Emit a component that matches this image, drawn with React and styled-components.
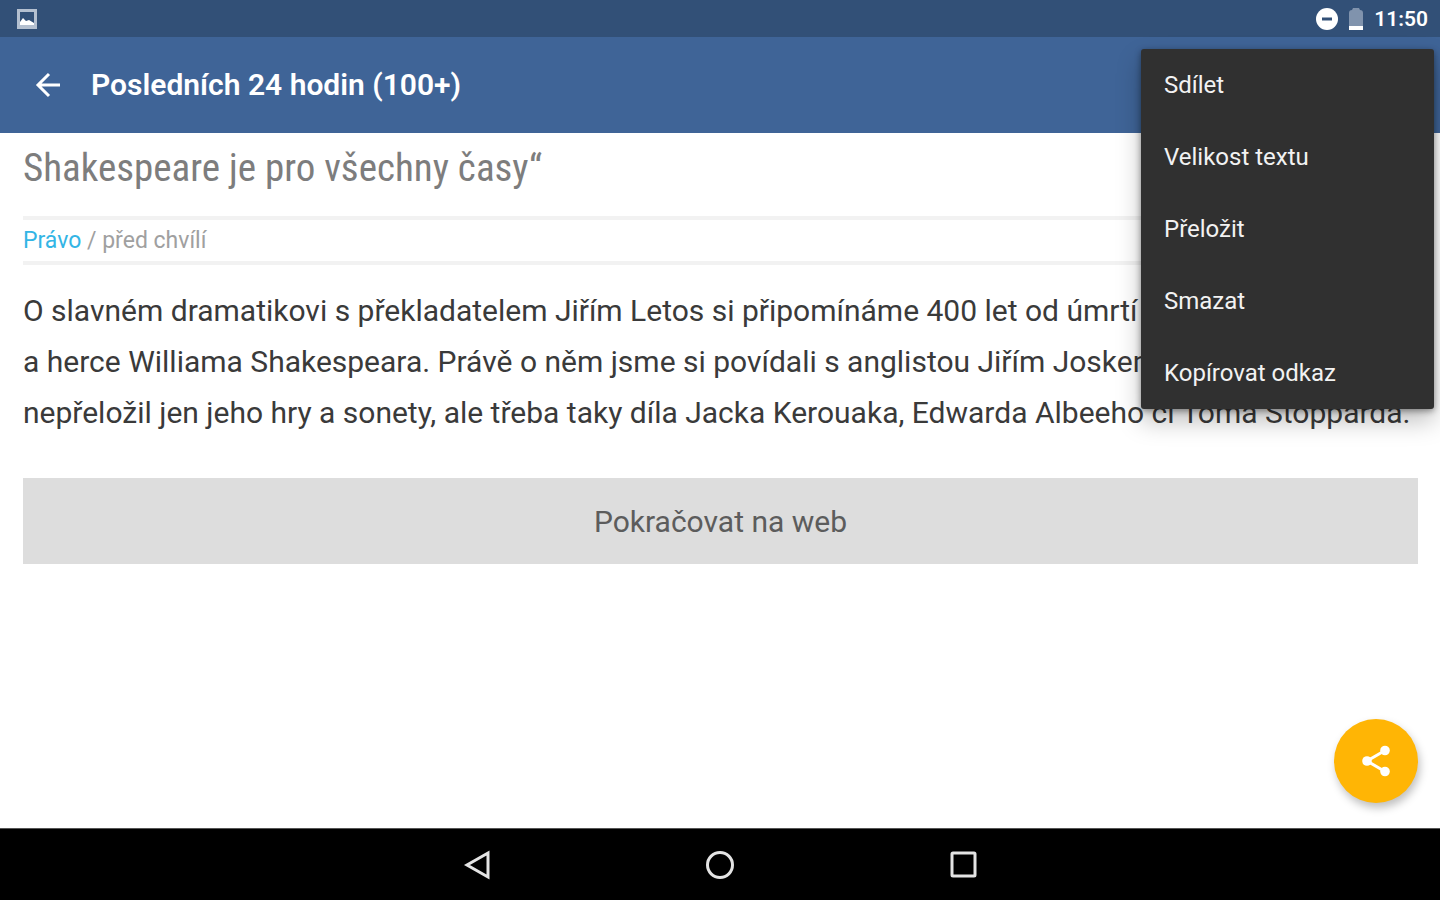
import { styled, createGlobalStyle } from 'styled-components';


const GlobalStyle = createGlobalStyle`
    *, *::before, *::after {
        box-sizing: border-box;
    }

    body {
        margin: 0;
        background-color: #fff;
        font-family: Roboto, "Noto Sans", sans-serif;
    }

    button {
        border: 0;
        padding: 0;
        background: none;
        color: inherit;
        font: inherit;
        cursor: pointer;
    }

    svg {
        display: block;
    }
`;

const Screen = styled.div`
    position: relative;
    display: flex;
    flex-direction: column;
    min-height: 100vh;
`;

const StatusBar = styled.div`
    display: flex;
    align-items: center;
    justify-content: space-between;
    height: 37px;
    padding: 0 12px 0 16px;
    background-color: #325077;
    color: #fff;
`;

const StatusGroup = styled.div`
    display: flex;
    align-items: center;
    gap: 11px;
`;

const Clock = styled.time`
    font-size: 21px;
    font-weight: 600;
    line-height: 24px;
`;

const AppBar = styled.header`
    display: flex;
    align-items: center;
    gap: 23px;
    height: 96px;
    padding: 0 28px;
    background-color: #3f6497;
    color: #fff;
`;

const BackButton = styled.button`
    display: flex;
    align-items: center;
    justify-content: center;
    width: 40px;
    height: 48px;
`;

const AppTitle = styled.h1`
    margin: 0;
    font-size: 30px;
    font-weight: 600;
    line-height: 36px;
`;

const Article = styled.main`
    flex: 1;
    padding: 11px 22px 24px 23px;
`;

const Headline = styled.h2`
    margin: 0 0 24px;
    color: #7d7d7d;
    font-family: "Roboto Condensed", "Liberation Sans Narrow", Roboto, sans-serif;
    font-size: 39px;
    font-weight: 400;
    line-height: 48px;
`;

const Meta = styled.div`
    padding: 8px 0;
    border-top: 4px solid #f2f2f2;
    border-bottom: 4px solid #f2f2f2;
    color: #a0a0a0;
    font-size: 23px;
    line-height: 25px;
`;

const SourceLink = styled.a`
    color: #33b5e5;
    text-decoration: none;
`;

const Perex = styled.p`
    margin: 20px 0 40px;
    color: #3a3a3a;
    font-size: 30px;
    line-height: 51px;
`;

const WebButton = styled.button`
    display: block;
    width: 100%;
    height: 86px;
    background-color: #ddd;
    color: #5c5c5c;
    font-size: 30px;
`;

const Menu = styled.div`
    position: absolute;
    top: 49px;
    right: 6px;
    display: flex;
    flex-direction: column;
    width: 293px;
    border-radius: 3px;
    background-color: #303030;
    box-shadow: 0 12px 24px rgba(0, 0, 0, 0.25), 0 2px 6px rgba(0, 0, 0, 0.4);
`;

const MenuItem = styled.button`
    height: 72px;
    padding: 0 23px;
    color: #f2f2f2;
    font-size: 24px;
    text-align: left;
`;

const Fab = styled.button`
    position: absolute;
    right: 22px;
    bottom: 97px;
    display: flex;
    align-items: center;
    justify-content: center;
    width: 84px;
    height: 84px;
    border-radius: 50%;
    background-color: #ffb505;
    color: #fff;
    box-shadow: 2px 5px 8px rgba(0, 0, 0, 0.25);
`;

const NavBar = styled.nav`
    display: grid;
    grid-template-columns: repeat(3, 243px);
    justify-content: center;
    height: 72px;
    border-top: 1px solid #555;
    background-color: #000;
    color: #e4e4e4;
`;

const NavButton = styled.button`
    display: flex;
    align-items: center;
    justify-content: center;
`;

const menuItems = ['Sdílet', 'Velikost textu', 'Přeložit', 'Smazat', 'Kopírovat odkaz'];

function PictureIcon() {
    return (
        <svg width="22" height="22" viewBox="0 0 22 22" aria-hidden="true">
            <path fill="#b4c0d0" fillRule="evenodd" d="M1 1h20v20H1zM4 4v12h14V4z" />
            <path fill="#fff" d="M4 17v-3l3-4 3 3 3-1 5 3v2z" />
        </svg>
    );
}

function DoNotDisturbIcon() {
    return (
        <svg width="22" height="22" viewBox="0 0 22 22" aria-hidden="true">
            <circle cx="11" cy="11" r="11" fill="#fff" />
            <path fill="#325077" d="M6 9.5h10v3H6z" />
        </svg>
    );
}

function BatteryIcon() {
    return (
        <svg width="14" height="22" viewBox="0 0 14 22" aria-hidden="true">
            <path fill="#8093ad" d="M4 0h6l1 2q3 0 3 3v13H0V5q0-3 3-3z" />
            <path fill="#fff" d="M0 18h14v4H0z" />
        </svg>
    );
}

function BackArrowIcon() {
    return (
        <svg width="26" height="26" viewBox="0 0 26 26" fill="none" stroke="currentColor" strokeWidth="3" aria-hidden="true">
            <path d="M25 13H3M14 2 3 13l11 11" />
        </svg>
    );
}

function ShareIcon() {
    return (
        <svg width="30" height="32" viewBox="0 0 30 32" fill="currentColor" aria-hidden="true">
            <path d="M24 5.500 6 16l18 10.500" fill="none" stroke="currentColor" strokeWidth="3" />
            <circle cx="24" cy="5.500" r="4.800" />
            <circle cx="6" cy="16" r="4.800" />
            <circle cx="24" cy="26.500" r="4.800" />
        </svg>
    );
}

export default function App() {
    return (
        <>
            <GlobalStyle />
            <Screen>
                <StatusBar>
                    <PictureIcon />
                    <StatusGroup>
                        <DoNotDisturbIcon />
                        <BatteryIcon />
                        <Clock>11:50</Clock>
                    </StatusGroup>
                </StatusBar>
                <AppBar>
                    <BackButton aria-label="Zpět">
                        <BackArrowIcon />
                    </BackButton>
                    <AppTitle>Posledních 24 hodin (100+)</AppTitle>
                </AppBar>
                <Article>
                    <Headline>Shakespeare je pro všechny časy“</Headline>
                    <Meta>
                        <SourceLink href="#pravo">Právo</SourceLink> / před chvílí
                    </Meta>
                    <Perex>
                        O slavném dramatikovi s překladatelem Jiřím Letos si připomínáme 400 let od úmrtí
                        <br />
                        a herce Williama Shakespeara. Právě o něm jsme si povídali s anglistou Jiřím Joskem
                        <br />
                        nepřeložil jen jeho hry a sonety, ale třeba taky díla Jacka Kerouaka, Edwarda Albeeho či Toma Stopparda.
                    </Perex>
                    <WebButton>Pokračovat na web</WebButton>
                </Article>
                <NavBar>
                    <NavButton aria-label="Zpět">
                        <svg width="28" height="30" viewBox="0 0 28 30" fill="none" stroke="currentColor" strokeWidth="3" aria-hidden="true">
                            <path d="M25 3v24L4 15z" />
                        </svg>
                    </NavButton>
                    <NavButton aria-label="Domů">
                        <svg width="30" height="30" viewBox="0 0 30 30" fill="none" stroke="currentColor" strokeWidth="3" aria-hidden="true">
                            <circle cx="15" cy="15" r="12.500" />
                        </svg>
                    </NavButton>
                    <NavButton aria-label="Přehled">
                        <svg width="28" height="28" viewBox="0 0 28 28" fill="none" stroke="currentColor" strokeWidth="3" aria-hidden="true">
                            <rect x="3" y="2" width="23" height="23" rx="1" />
                        </svg>
                    </NavButton>
                </NavBar>
                <Menu role="menu">
                    {menuItems.map((item) => (
                        <MenuItem key={item} role="menuitem">{item}</MenuItem>
                    ))}
                </Menu>
                <Fab aria-label="Sdílet článek">
                    <ShareIcon />
                </Fab>
            </Screen>
        </>
    );
}
